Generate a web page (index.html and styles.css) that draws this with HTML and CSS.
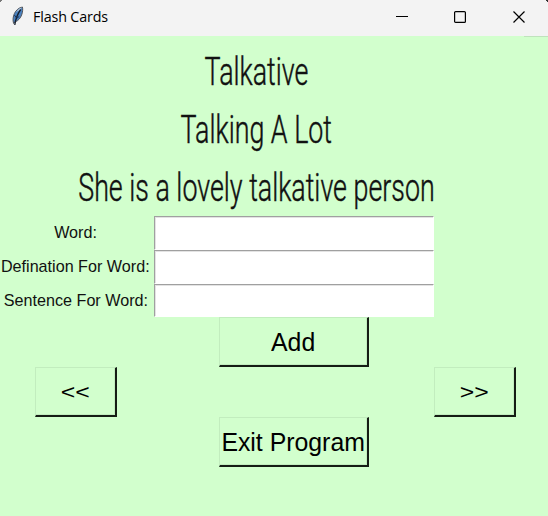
FILE: index.html
```html
<!DOCTYPE html>
<html lang="en">
<head>
<meta charset="utf-8">
<title>Flash Cards</title>
<link rel="stylesheet" href="styles.css">
</head>
<body>
<header class="titlebar">
  <svg class="feather" width="14" height="20" viewBox="0 0 14 20">
    <path d="M2.6 17.5 C.6 11 4 2.5 11.4 1 C12.5 5 10.5 13.5 4.5 15.7Z" fill="#4a82c0" stroke="#50545c" stroke-width="1"/>
    <path d="M5 6 C6.5 3.5 8.5 2 10.8 1.4 L9.5 4Z" fill="#a9bdd1"/>
    <path d="M3.8 19 C4.5 13 6.5 8 9.7 3.5" fill="none" stroke="#17202e" stroke-width="1.3"/>
    <path d="M3.4 9 L5.5 12 M8.2 10.5 L6 12" stroke="#17345c" stroke-width="1"/>
  </svg>
  <span class="caption">Flash Cards</span>
  <div class="controls">
    <svg width="12" height="12" viewBox="0 0 12 12"><path d="M0 5.5H12" stroke="#000"/></svg>
    <svg width="12" height="12" viewBox="0 0 12 12"><rect x=".6" y=".6" width="10.8" height="10.8" rx="1" fill="none" stroke="#000" stroke-width="1.2"/></svg>
    <svg width="12" height="12" viewBox="0 0 12 12"><path d="M.5 .5L11.5 11.5M11.5 .5L.5 11.5" stroke="#000" stroke-width="1.2"/></svg>
  </div>
</header>
<main class="window">
  <h1 class="card word"><span>Talkative</span></h1>
  <h2 class="card meaning"><span>Talking A Lot</span></h2>
  <p class="card sentence"><span>She is a lovely talkative person</span></p>
  <label class="label" for="word"><span>Word:</span></label>
  <input class="entry" id="word" type="text">
  <label class="label" for="definition"><span>Defination For Word:</span></label>
  <input class="entry" id="definition" type="text">
  <label class="label" for="sentence"><span>Sentence For Word:</span></label>
  <input class="entry" id="sentence" type="text">
  <button class="button add"><span>Add</span></button>
  <button class="button small prev"><span>&lt;&lt;</span></button>
  <button class="button small next"><span>&gt;&gt;</span></button>
  <button class="button exit"><span>Exit Program</span></button>
</main>
</body>
</html>
```
FILE: styles.css
```css
* { box-sizing: border-box; }
body {
  margin: 0;
  height: 516px;
  overflow: hidden;
  background: #d2ffcd;
  color: #111;
  font-family: "Liberation Sans", Arial, sans-serif;
}
.titlebar {
  display: flex;
  align-items: center;
  height: 36px;
  padding: 0 23px 3px 11px;
  background:
    linear-gradient(135deg, #777 1.5px, transparent 1.5px),
    linear-gradient(225deg, #333 1.5px, transparent 1.5px),
    #f3f3f3;
}
.feather { margin-top: -1px; }
.caption {
  margin-left: 8px;
  font: 14.3px "Open Sans", "Noto Sans", sans-serif;
  letter-spacing: -0.15px;
  color: #000;
}
.controls {
  display: flex;
  gap: 47px;
  margin-left: auto;
}
.controls svg { display: block; }
.controls svg:first-child { margin-right: -1px; }
.window {
  display: grid;
  grid-template-columns: 154px 280px 82px;
  grid-template-rows: 58px 58px 58px 34px 34px 33px 50px 50px 50px;
  padding-top: 6px;
  background: linear-gradient(#bfe3bc, #bfe3bc) right top / 24px 1px no-repeat;
}
.card {
  grid-column: 1 / -1;
  display: flex;
  justify-content: center;
  margin: 0;
  padding: 1px 3px 0 0;
  font: 300 38px/58px Roboto, sans-serif;
  -webkit-text-stroke: 0.45px #111;
  white-space: nowrap;
}
.card span { display: block; transform: scaleX(0.706); }
.label {
  grid-column: 1;
  display: flex;
  align-items: center;
  justify-content: center;
  font-size: 17px;
  white-space: nowrap;
  padding-right: 3px;
}
.label span { transform: scaleX(0.95); }
.label { min-width: 0; }
.entry {
  width: 280px;
  height: 100%;
  padding: 0 4px;
  border: 1px solid #fff;
  border-top-color: #a0a0a0;
  border-left-color: #a0a0a0;
  border-radius: 0;
  box-shadow: inset 1px 1px #e3e3e3;
  background: #fff;
  font: 16px "Liberation Sans", sans-serif;
}
.button {
  display: flex;
  align-items: center;
  justify-content: center;
  grid-column: 2;
  justify-self: center;
  width: 150px;
  height: 50px;
  padding: 1px 0 0;
  border: 1px solid #c2edbe;
  border-right: 2px solid #151d14;
  border-bottom: 2px solid #151d14;
  border-radius: 0;
  box-shadow: inset -1px -1px #c2edbe;
  background: #d2ffcd;
  color: #000;
  font: 26px "Liberation Sans", Arial, sans-serif;
  white-space: nowrap;
}
.button span { transform: scaleX(0.955); }
.small { width: 82px; }
.small span { transform: scale(0.955, 0.8); }
.prev { grid-column: 1; grid-row: 8; margin-right: 2px; }
.next { grid-column: 3; grid-row: 8; }
.exit { grid-row: 9; }
```
